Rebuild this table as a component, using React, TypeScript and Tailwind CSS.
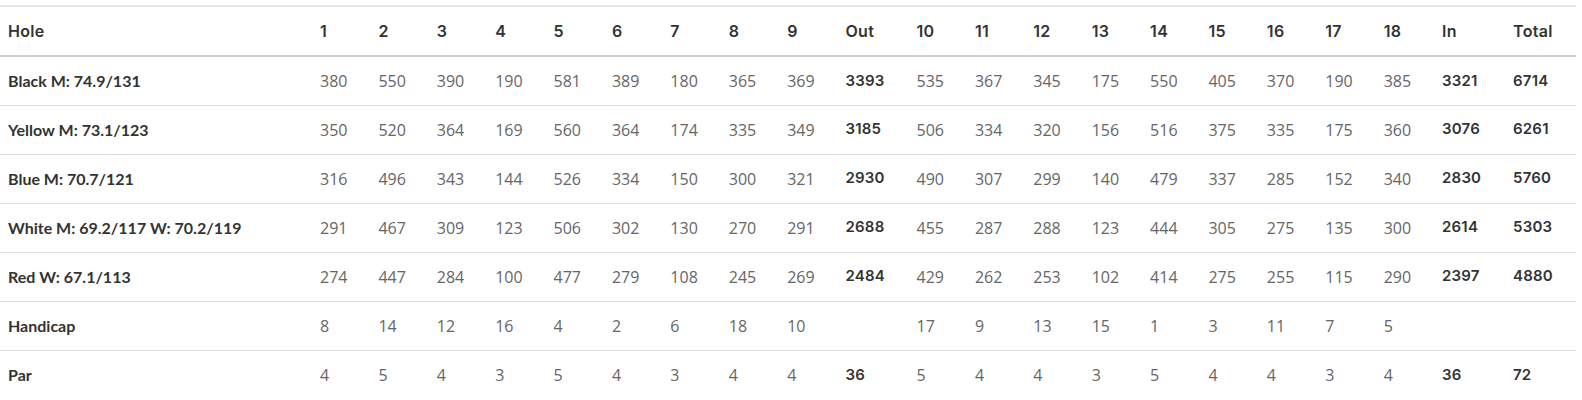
const holes = Array.from({ length: 18 }, (_, i) => String(i + 1));

type Row = { label: string; out: number[]; inn: number[]; outSum: string; inSum: string; total: string };

const rows: Row[] = [
  { label: "Black M: 74.9/131", out: [380, 550, 390, 190, 581, 389, 180, 365, 369], inn: [535, 367, 345, 175, 550, 405, 370, 190, 385], outSum: "3393", inSum: "3321", total: "6714" },
  { label: "Yellow M: 73.1/123", out: [350, 520, 364, 169, 560, 364, 174, 335, 349], inn: [506, 334, 320, 156, 516, 375, 335, 175, 360], outSum: "3185", inSum: "3076", total: "6261" },
  { label: "Blue M: 70.7/121", out: [316, 496, 343, 144, 526, 334, 150, 300, 321], inn: [490, 307, 299, 140, 479, 337, 285, 152, 340], outSum: "2930", inSum: "2830", total: "5760" },
  { label: "White M: 69.2/117 W: 70.2/119", out: [291, 467, 309, 123, 506, 302, 130, 270, 291], inn: [455, 287, 288, 123, 444, 305, 275, 135, 300], outSum: "2688", inSum: "2614", total: "5303" },
  { label: "Red W: 67.1/113", out: [274, 447, 284, 100, 477, 279, 108, 245, 269], inn: [429, 262, 253, 102, 414, 275, 255, 115, 290], outSum: "2484", inSum: "2397", total: "4880" },
  { label: "Handicap", out: [8, 14, 12, 16, 4, 2, 6, 18, 10], inn: [17, 9, 13, 15, 1, 3, 11, 7, 5], outSum: "", inSum: "", total: "" },
  { label: "Par", out: [4, 5, 4, 3, 5, 4, 3, 4, 4], inn: [5, 4, 4, 3, 5, 4, 4, 3, 4], outSum: "36", inSum: "36", total: "72" },
];

const head = "font-['Inter',sans-serif] font-semibold text-[16px] tracking-[0.3px] text-[#333]";
const num = "font-['Open_Sans',sans-serif] text-[16px] text-[#666]";
const bold = "font-['Inter',sans-serif] font-semibold text-[15px] tracking-[0.2px] text-[#333]";

export default function App() {
  return (
    <div className="bg-white w-[1582px] h-[400px] pt-[5px]">
      <table className="table-fixed border-collapse w-[1576px] text-left">
        <colgroup>
          <col className="w-[312px]" />
          {holes.slice(0, 9).map((h) => (
            <col key={h} className="w-[58.4px]" />
          ))}
          <col className="w-[71px]" />
          {holes.slice(9).map((h) => (
            <col key={h} className="w-[58.4px]" />
          ))}
          <col className="w-[71px]" />
          <col className="w-[71px]" />
        </colgroup>
        <thead>
          <tr className="h-[50px] border-t-2 border-b-2 border-t-[#e5e5e5] border-b-[#d0d0d0]">
            <th className={`${head} pl-2`}>Hole</th>
            {holes.slice(0, 9).map((h) => (
              <th key={h} className={`${head} pl-2`}>{h}</th>
            ))}
            <th className={`${head} pl-2`}>Out</th>
            {holes.slice(9).map((h) => (
              <th key={h} className={`${head} pl-2`}>{h}</th>
            ))}
            <th className={`${head} pl-2`}>In</th>
            <th className={`${head} pl-2`}>Total</th>
          </tr>
        </thead>
        <tbody>
          {rows.map((r, i) => (
            <tr key={r.label} className={`h-[49px] ${i < rows.length - 1 ? "border-b border-[#dedede]" : ""}`}>
              <td className="pl-2 font-['Lato',sans-serif] font-bold text-[16px] text-[#333]">{r.label}</td>
              {r.out.map((v, j) => (
                <td key={j} className={`${num} pl-2`}>{v}</td>
              ))}
              <td className={`${bold} pl-2`}>{r.outSum}</td>
              {r.inn.map((v, j) => (
                <td key={j} className={`${num} pl-2`}>{v}</td>
              ))}
              <td className={`${bold} pl-2`}>{r.inSum}</td>
              <td className={`${bold} pl-2`}>{r.total}</td>
            </tr>
          ))}
        </tbody>
      </table>
    </div>
  );
}
